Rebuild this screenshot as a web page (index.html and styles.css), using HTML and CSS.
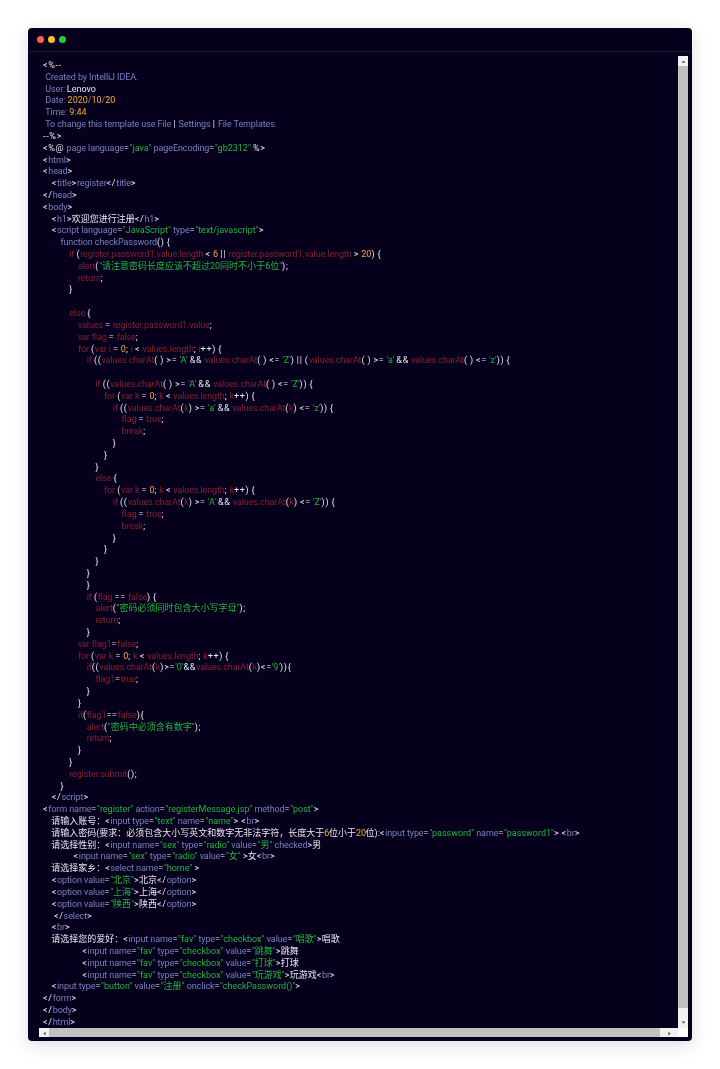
FILE: index.html
```html
<!DOCTYPE html>
<html lang="zh-CN">
<head>
<meta charset="utf-8">
<title>register</title>
<link rel="stylesheet" href="styles.css">
</head>
<body>
<main class="window">
<header class="titlebar"><span class="dot red"></span><span class="dot amber"></span><span class="dot green"></span></header>
<div class="viewer">
<pre class="code"><code>&lt;%--
 <span class="t">Created by IntelliJ IDEA.</span>
 <span class="t">User:</span> <span class="z">Lenovo</span>
 <span class="t">Date:</span> <span class="y">2020</span><span class="t">/</span><span class="y">10</span><span class="t">/</span><span class="y">20</span>
 <span class="t">Time:</span> <span class="y">9:44</span>
 <span class="t">To change this template use File</span> | <span class="t">Settings</span> | <span class="t">File Templates.</span>
--%&gt;
&lt;%@ <span class="t">page language</span>=<span class="s">"java"</span> <span class="t">pageEncoding</span>=<span class="s">"gb2312"</span> %&gt;
&lt;<span class="t">html</span>&gt;
&lt;<span class="t">head</span>&gt;
    &lt;<span class="t">title</span>&gt;<span class="t">register</span>&lt;/<span class="t">title</span>&gt;
&lt;/<span class="t">head</span>&gt;
&lt;<span class="t">body</span>&gt;
    &lt;<span class="t">h1</span>&gt;<span class="z">欢迎您进行注册</span>&lt;/<span class="t">h1</span>&gt;
    &lt;<span class="t">script language</span>=<span class="s">"JavaScript"</span> <span class="t">type</span>=<span class="s">"text/javascript"</span>&gt;
        <span class="t">function checkPassword</span>() {
            <span class="r">if</span> (<span class="r">register.password1.value.length</span> &lt; <span class="y">6</span> || <span class="r">register.password1.value.length</span> &gt; <span class="y">20</span>) {
                <span class="r">alert</span>(<span class="s">"请注意密码长度应该不超过20同时不小于6位"</span>);
                <span class="r">return</span>;
            }

            <span class="r">else</span> {
                <span class="r">values</span> = <span class="r">register.password1.value</span>;
                <span class="r">var flag</span> = <span class="r">false</span>;
                <span class="r">for</span> (<span class="r">var i</span> = <span class="y">0</span>; <span class="r">i</span> &lt; <span class="r">values.length</span>; <span class="r">i</span>++) {
                    <span class="r">if</span> ((<span class="r">values.charAt</span>( ) &gt;= <span class="s">'A'</span> &amp;&amp; <span class="r">values.charAt</span>( ) &lt;= <span class="s">'Z'</span>) || (<span class="r">values.charAt</span>( ) &gt;= <span class="s">'a'</span> &amp;&amp; <span class="r">values.charAt</span>( ) &lt;= <span class="s">'z'</span>)) {

                        <span class="r">if</span> ((<span class="r">values.charAt</span>( ) &gt;= <span class="s">'A'</span> &amp;&amp; <span class="r">values.charAt</span>( ) &lt;= <span class="s">'Z'</span>)) {
                            <span class="r">for</span> (<span class="r">var k</span> = <span class="y">0</span>; <span class="r">k</span> &lt; <span class="r">values.length</span>; <span class="r">k</span>++) {
                                <span class="r">if</span> ((<span class="r">values.charAt</span>(<span class="r">k</span>) &gt;= <span class="s">'a'</span> &amp;&amp; <span class="r">values.charAt</span>(<span class="r">k</span>) &lt;= <span class="s">'z'</span>)) {
                                    <span class="r">flag</span> = <span class="r">true</span>;
                                    <span class="r">break</span>;
                                }
                            }
                        }
                        <span class="r">else</span> {
                            <span class="r">for</span> (<span class="r">var k</span> = <span class="y">0</span>; <span class="r">k</span> &lt; <span class="r">values.length</span>; <span class="r">k</span>++) {
                                <span class="r">if</span> ((<span class="r">values.charAt</span>(<span class="r">k</span>) &gt;= <span class="s">'A'</span> &amp;&amp; <span class="r">values.charAt</span>(<span class="r">k</span>) &lt;= <span class="s">'Z'</span>)) {
                                    <span class="r">flag</span> = <span class="r">true</span>;
                                    <span class="r">break</span>;
                                }
                            }
                        }
                    }
                    }
                    <span class="r">if</span> (<span class="r">flag</span> == <span class="r">false</span>) {
                        <span class="r">alert</span>(<span class="s">"密码必须同时包含大小写字母"</span>);
                        <span class="r">return</span>;
                    }
                <span class="r">var flag1</span>=<span class="r">false</span>;
                <span class="r">for</span> (<span class="r">var k</span> = <span class="y">0</span>; <span class="r">k</span> &lt; <span class="r">values.length</span>; <span class="r">k</span>++) {
                    <span class="r">if</span>((<span class="r">values.charAt</span>(<span class="r">k</span>)&gt;=<span class="s">'0'</span>&amp;&amp;<span class="r">values.charAt</span>(<span class="r">k</span>)&lt;=<span class="s">'9'</span>)){
                        <span class="r">flag1</span>=<span class="r">true</span>;
                    }
                }
                <span class="r">if</span>(<span class="r">flag1</span>==<span class="r">false</span>){
                    <span class="r">alert</span>(<span class="s">"密码中必须含有数字"</span>);
                    <span class="r">return</span>;
                }
            }
            <span class="r">register.submit</span>();
        }
    &lt;/<span class="t">script</span>&gt;
&lt;<span class="t">form name</span>=<span class="s">"register"</span> <span class="t">action</span>=<span class="s">"registerMessage.jsp"</span> <span class="t">method</span>=<span class="s">"post"</span>&gt;
    <span class="z">请输入账号：</span>&lt;<span class="t">input type</span>=<span class="s">"text"</span> <span class="t">name</span>=<span class="s">"name"</span>&gt; &lt;<span class="t">br</span>&gt;
    <span class="z">请输入密码(要求：必须包含大小写英文和数字无非法字符，长度大于</span><span class="y">6</span><span class="z">位小于</span><span class="y">20</span><span class="z">位):</span>&lt;<span class="t">input type</span>=<span class="s">"password"</span> <span class="t">name</span>=<span class="s">"password1"</span>&gt; &lt;<span class="t">br</span>&gt;
    <span class="z">请选择性别：</span>&lt;<span class="t">input name</span>=<span class="s">"sex"</span> <span class="t">type</span>=<span class="s">"radio"</span> <span class="t">value</span>=<span class="s">"男"</span> <span class="t">checked</span>&gt;<span class="z">男</span>
              &lt;<span class="t">input name</span>=<span class="s">"sex"</span> <span class="t">type</span>=<span class="s">"radio"</span> <span class="t">value</span>=<span class="s">"女"</span> &gt;<span class="z">女</span>&lt;<span class="t">br</span>&gt;
    <span class="z">请选择家乡：</span>&lt;<span class="t">select name</span>=<span class="s">"home"</span> &gt;
    &lt;<span class="t">option value</span>=<span class="s">"北京"</span>&gt;<span class="z">北京</span>&lt;/<span class="t">option</span>&gt;
    &lt;<span class="t">option value</span>=<span class="s">"上海"</span>&gt;<span class="z">上海</span>&lt;/<span class="t">option</span>&gt;
    &lt;<span class="t">option value</span>=<span class="s">"陕西"</span>&gt;<span class="z">陕西</span>&lt;/<span class="t">option</span>&gt;
     &lt;/<span class="t">select</span>&gt;
    &lt;<span class="t">br</span>&gt;
    <span class="z">请选择您的爱好：</span>&lt;<span class="t">input name</span>=<span class="s">"fav"</span> <span class="t">type</span>=<span class="s">"checkbox"</span> <span class="t">value</span>=<span class="s">"唱歌"</span>&gt;<span class="z">唱歌</span>
                  &lt;<span class="t">input name</span>=<span class="s">"fav"</span> <span class="t">type</span>=<span class="s">"checkbox"</span> <span class="t">value</span>=<span class="s">"跳舞"</span>&gt;<span class="z">跳舞</span>
                  &lt;<span class="t">input name</span>=<span class="s">"fav"</span> <span class="t">type</span>=<span class="s">"checkbox"</span> <span class="t">value</span>=<span class="s">"打球"</span>&gt;<span class="z">打球</span>
                  &lt;<span class="t">input name</span>=<span class="s">"fav"</span> <span class="t">type</span>=<span class="s">"checkbox"</span> <span class="t">value</span>=<span class="s">"玩游戏"</span>&gt;<span class="z">玩游戏</span>&lt;<span class="t">br</span>&gt;
    &lt;<span class="t">input type</span>=<span class="s">"button"</span> <span class="t">value</span>=<span class="s">"注册"</span> <span class="t">onclick</span>=<span class="s">"checkPassword()"</span>&gt;
&lt;/<span class="t">form</span>&gt;
&lt;/<span class="t">body</span>&gt;
&lt;/<span class="t">html</span>&gt;</code></pre>
<div class="vbar">
<span class="cap"><svg class="arrow" viewBox="0 0 6 4"><path d="M3 0.5 5.5 3.5H.5z"/></svg></span>
<span class="vthumb"></span>
<span class="cap"><svg class="arrow" viewBox="0 0 6 4"><path d="M3 3.5 5.5.5H.5z"/></svg></span>
</div>
<div class="hbar">
<span class="cap"><svg class="arrow side" viewBox="0 0 4 6"><path d="M.5 3 3.5.5v5z"/></svg></span>
<span class="hthumb"></span>
<span class="cap end"><svg class="arrow side" viewBox="0 0 4 6"><path d="M3.5 3 .5.5v5z"/></svg></span>
</div>
<div class="corner"></div>
</div>
</main>
</body>
</html>
```

FILE: styles.css
```css
* { box-sizing: border-box; }
html, body { margin: 0; background: #fff; }
body { padding: 28px 28px 28px; }

.window {
  height: 1013px;
  background: #07001d;
  border-radius: 4px;
  box-shadow: 0 4px 18px rgba(20, 10, 60, 0.14);
  overflow: hidden;
  display: flex;
  flex-direction: column;
}

.titlebar {
  height: 24px;
  flex: none;
  display: flex;
  align-items: center;
  gap: 4px;
  padding: 0 0 0 8.5px;
  border-bottom: 1px solid #1d1733;
}
.dot { width: 7px; height: 7px; border-radius: 50%; }
.red { background: #ff5f56; }
.amber { background: #ffbd2e; }
.green { background: #27c93f; }

.viewer {
  flex: 1;
  min-height: 0;
  display: grid;
  grid-template-columns: 1fr 10px;
  grid-template-rows: 972px 9px;
  padding: 4px 4px 0 11px;
}

.code {
  margin: 0;
  padding: 4px 0 0 4px;
  overflow: hidden;
  font-family: Roboto, "Noto Sans CJK TC", sans-serif;
  font-size: 9px;
  line-height: 11.81px;
  color: #e6e6f2;
  white-space: pre;
  letter-spacing: 0.7px;
  word-spacing: -0.75px;
  filter: blur(0.25px);
}
.code code { font: inherit; }
.t { letter-spacing: -0.1px; word-spacing: 0; color: #7580c0; }
.r { letter-spacing: -0.13px; word-spacing: 0; color: #84202e; }
.s { letter-spacing: 0; word-spacing: 0; color: #20b53f; }
.y { letter-spacing: 0; word-spacing: 0; color: #eeb020; }
.z { letter-spacing: 0; word-spacing: 0; margin-left: -0.5px; }

.vbar, .hbar { background: #f1f1f1; display: flex; }
.vbar { flex-direction: column; }
.cap { flex: none; width: 10px; height: 10px; display: flex; align-items: center; justify-content: center; }
.vbar .cap:last-child { height: 20px; align-items: flex-end; padding-bottom: 4px; }
.vthumb { flex: 1; background: #c1c1c1; }
.hthumb { flex: 1; background: #c1c1c1; }
.hbar .end { width: 18px; }
.arrow { width: 5px; height: 3px; fill: #505050; }
.arrow.side { width: 3px; height: 5px; }
.corner { background: #fff; }
```
